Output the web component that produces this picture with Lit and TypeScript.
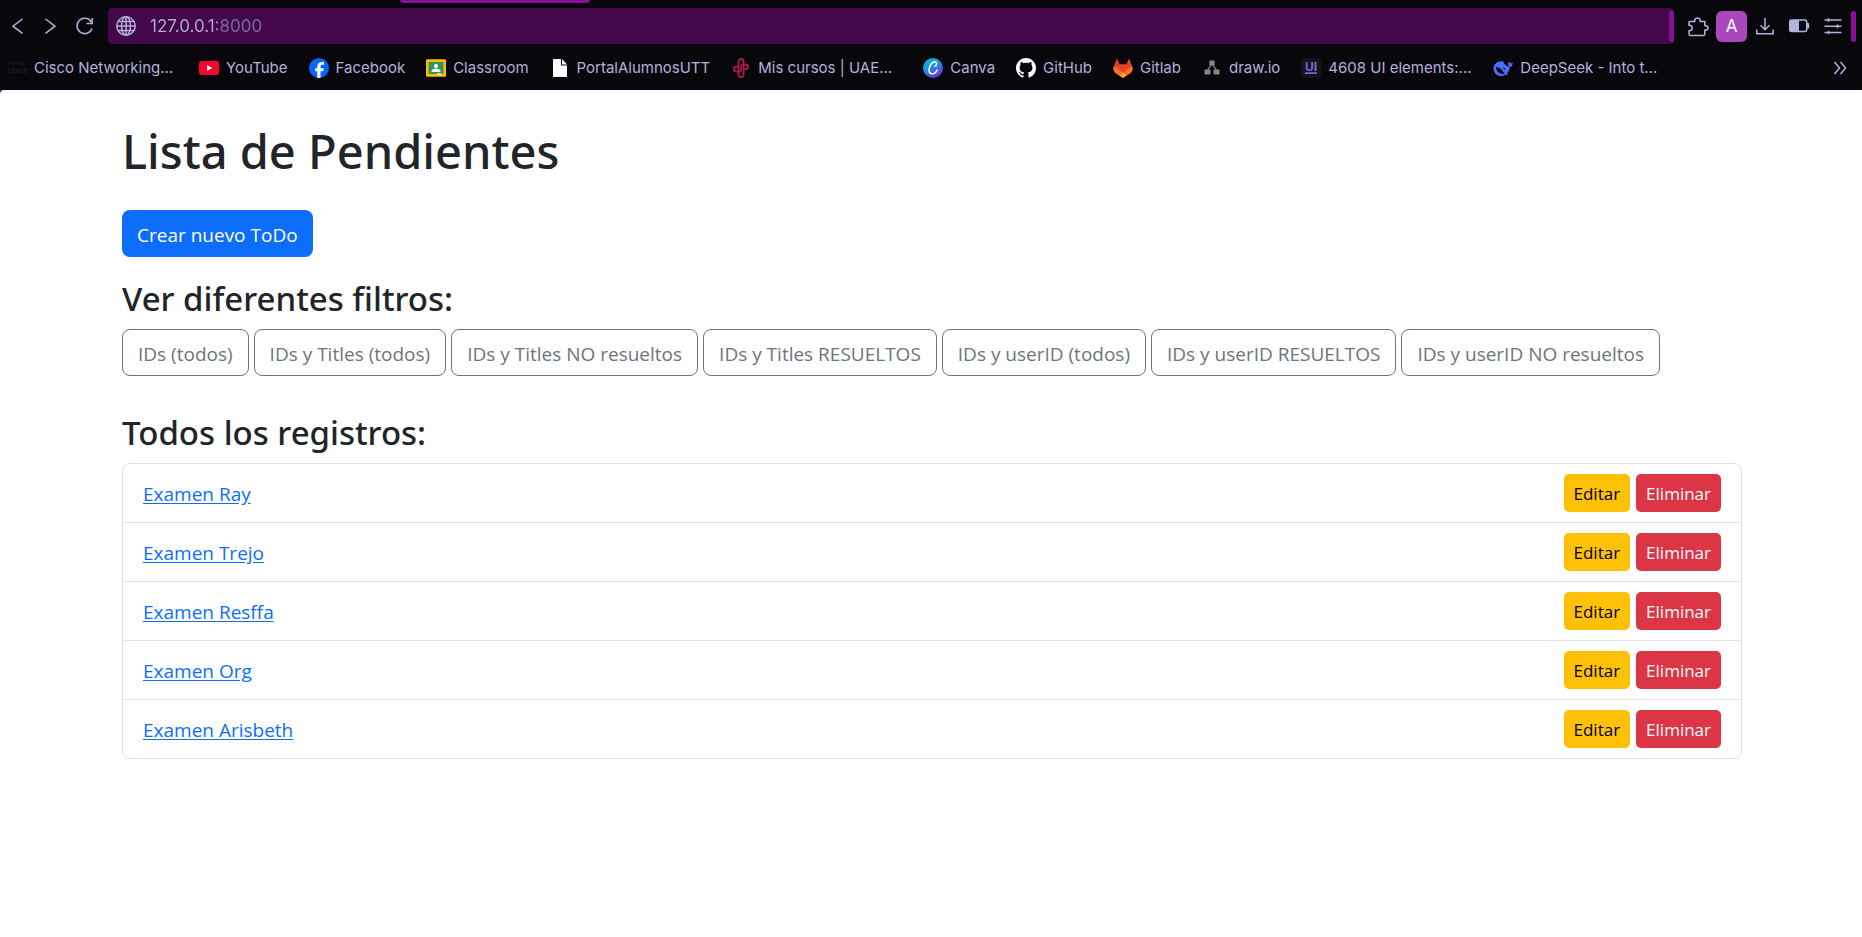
import { LitElement, html, svg, css, type TemplateResult } from "lit";
import { customElement } from "lit/decorators.js";
import { classMap } from "lit/directives/class-map.js";

interface Bookmark {
  label: string;
  icon: TemplateResult;
  long?: boolean;
}

const icon = (body: TemplateResult, size = 20) => html`
  <svg width=${size} height=${size} viewBox="0 0 20 20" aria-hidden="true">${body}</svg>
`;

const bookmarks: Bookmark[] = [
  {
    label: "Cisco Networking...",
    long: true,
    icon: icon(svg`
      <path d="M1.5 5v2M4 3.5V7M6.500 2v5.500M9 3.500V7M11.500 3.500V7M14 2v5.500M16.500 3.500V7M19 5v2" stroke="#1b1a20" stroke-width="1.200"/>
      <text x="0" y="15" font-family="Inter, sans-serif" font-size="8" font-weight="700" fill="#1b1a20">cisco</text>`),
  },
  {
    label: "YouTube",
    icon: icon(svg`
      <rect x="0" y="3" width="20" height="14" rx="3" fill="#ff0033"/>
      <path d="M8 7l5.200 3L8 13z" fill="#fff"/>`),
  },
  {
    label: "Facebook",
    icon: icon(svg`
      <circle cx="10" cy="10" r="10" fill="#0866ff"/>
      <path d="M8.300 19.900v-6.700H6.200v-3h2.100V8.800c0-3.400 1.500-4.900 4.800-4.900.6 0 1.400.1 1.900.2v2.700c-.3 0-.7-.1-1.200-.1-1.700 0-2.300.6-2.300 2.300v1.200h3.300l-.6 3h-2.700v6.800a10 10 0 0 1-3.200-.1z" fill="#fff"/>`),
  },
  {
    label: "Classroom",
    icon: icon(svg`
      <rect x="0" y="1.300" width="20" height="17.400" rx="1.300" fill="#fbbc04"/>
      <rect x="2.600" y="4" width="14.800" height="12" fill="#2f9a58"/>
      <circle cx="10" cy="8" r="2" fill="#fff"/>
      <path d="M5.600 14v-1c0-1.700 2.600-2.500 4.400-2.500s4.400.8 4.400 2.500v1z" fill="#fff"/>
      <rect x="11" y="15.400" width="4.500" height="1.200" fill="#fff"/>`),
  },
  {
    label: "PortalAlumnosUTT",
    icon: icon(svg`
      <path d="M4 1h7v6.500h6V19H3V2a1 1 0 0 1 1-1z" fill="#fff"/>
      <path d="M12 1l5.200 5.500H12z" fill="#fff"/>`),
  },
  {
    label: "Mis cursos | UAE...",
    long: true,
    icon: icon(svg`
      <g fill="none" stroke="#a81e42" stroke-width="1.800">
        <rect x="7.500" y="1" width="5" height="18" rx="2.500"/>
        <path d="M10 12V8.500a2 2 0 0 1 2-2h2.700a2.300 2.300 0 0 1 0 4.600H12M10 8v3.500a2 2 0 0 1-2 2H5.300a2.300 2.300 0 0 1 0-4.600H8"/>
      </g>`),
  },
  {
    label: "Canva",
    icon: icon(svg`
      <defs>
        <linearGradient id="cv" x1="0.100" y1="0" x2="0.600" y2="1">
          <stop offset="0" stop-color="#00c9c4"/>
          <stop offset="0.500" stop-color="#1f8fe0"/>
          <stop offset="1" stop-color="#7a2ae8"/>
        </linearGradient>
      </defs>
      <circle cx="10" cy="10" r="10" fill="url(#cv)"/>
      <path d="M12 8.200c1.600-.6 2.400-3.700.6-4.200C9.600 3.300 6 7.700 6 11.600c0 2.700 1.300 4.200 3.200 4.200 2.200 0 4-1.700 5-3.800" fill="none" stroke="#fff" stroke-width="1.600" stroke-linecap="round"/>`),
  },
  {
    label: "GitHub",
    icon: html`<svg width="20" height="20" viewBox="0 0 16 16" aria-hidden="true">
      <path fill="#fff" d="M8 0C3.580 0 0 3.580 0 8c0 3.540 2.290 6.530 5.470 7.590.4.070.55-.17.55-.38 0-.19-.01-.82-.01-1.490-2.010.37-2.530-.49-2.690-.94-.09-.23-.48-.94-.82-1.130-.28-.15-.68-.52-.01-.53.63-.01 1.080.58 1.230.82.72 1.210 1.870.87 2.330.66.07-.52.28-.87.51-1.070-1.780-.2-3.640-.89-3.640-3.950 0-.87.31-1.590.82-2.150-.08-.2-.36-1.020.08-2.120 0 0 .67-.21 2.200.82.64-.18 1.320-.27 2-.27.68 0 1.360.09 2 .27 1.530-1.040 2.200-.82 2.200-.82.44 1.100.16 1.920.08 2.120.51.56.82 1.270.82 2.150 0 3.070-1.870 3.750-3.650 3.950.29.25.54.73.54 1.480 0 1.070-.01 1.930-.01 2.200 0 .21.15.46.55.38A8.013 8.013 0 0016 8c0-4.420-3.580-8-8-8z"/>
    </svg>`,
  },
  {
    label: "Gitlab",
    icon: icon(svg`
      <path d="M3.900.4L1 8a6.500 6.500 0 0 0 2 7.300l7 4.700 7-4.700A6.500 6.500 0 0 0 19 8L16.100.4l-2.700 5.900H6.600z" fill="#e24329"/>
      <path d="M1 8c-1.600 3.500.2 6.200 2 7.400l3.200 2.200 3.800-2.900zM19 8c1.600 3.500-.2 6.200-2 7.400l-3.200 2.200-3.800-2.900z" fill="#fc6d26"/>
      <path d="M6.200 17.500L10 14.600l3.800 2.900L10 20z" fill="#fca326"/>`),
  },
  {
    label: "draw.io",
    icon: icon(svg`
      <path d="M9 7l-4 6M11 7l4 6" stroke="#858585" stroke-width="1.300"/>
      <rect x="7.300" y="2.600" width="5.400" height="5" rx="0.800" fill="#858585"/>
      <rect x="2.500" y="11.500" width="6" height="5" rx="0.800" fill="#858585"/>
      <rect x="11.500" y="11.500" width="6" height="5" rx="0.800" fill="#858585"/>`),
  },
  {
    label: "4608 UI elements:...",
    long: true,
    icon: icon(svg`
      <defs>
        <linearGradient id="ui" x1="0" y1="0" x2="1" y2="1">
          <stop offset="0" stop-color="#5d5fe8"/>
          <stop offset="1" stop-color="#a463d8"/>
        </linearGradient>
      </defs>
      <rect width="20" height="20" rx="3" fill="#151416"/>
      <text x="10" y="12.500" text-anchor="middle" font-family="Inter, sans-serif" font-size="12" font-weight="700" fill="url(#ui)">UI</text>
      <rect x="4" y="14.200" width="12" height="1.800" fill="#6b62e4"/>`),
  },
  {
    label: "DeepSeek - Into t...",
    long: true,
    icon: icon(svg`
      <path d="M9 3.200C4 3 .5 6.300.5 10.500c0 4.300 3.200 7.600 7.600 7.600 2 0 3.600-.6 4.900-1.500l2.200.6-1-1.700c1.700-1.900 2.200-4 2.400-6.200 1.700-.3 2.900-1.500 3.200-4.700-1 .5-1.700.5-2.400.8-.6-.9-1-1.300-1.100-2-1.700 1.300-1.500 3.500-.1 4.800-.7.600-1.600.6-2.300-.1C12.300 6.500 10.500 5.500 10.200 3.200z" fill="#4d6bfe"/>
      <path d="M3 9.400c2.200-.6 4.900 1 6.300 3.200.8 1.300 1.500 2.100 2.700 2.800-3.900 1.200-8.700-1.200-9-6z" fill="#09070d"/>
      <path d="M10 9.500c1.400-.2 2.500 1 2.300 2.600-1-.6-1.900-1.300-2.300-2.600z" fill="#09070d"/>`),
  },
];

const filters = [
  "IDs (todos)",
  "IDs y Titles (todos)",
  "IDs y Titles NO resueltos",
  "IDs y Titles RESUELTOS",
  "IDs y userID (todos)",
  "IDs y userID RESUELTOS",
  "IDs y userID NO resueltos",
];

const records = ["Examen Ray", "Examen Trejo", "Examen Resffa", "Examen Org", "Examen Arisbeth"];

@customElement("browser-chrome")
export class BrowserChrome extends LitElement {
  static styles = css`
    :host {
      display: block;
      height: 90px;
      background: #08070c;
      color: #b2b2dc;
      font: 15px/20px Inter, sans-serif;
    }
    .tabs {
      height: 8px;
      padding-left: 400px;
    }
    .tab {
      width: 190px;
      height: 3px;
      border-radius: 0 0 4px 4px;
      background: #880f9a;
    }
    .toolbar {
      display: flex;
      align-items: center;
      height: 36px;
      padding-right: 6px;
    }
    button {
      display: grid;
      place-items: center;
      flex: none;
      padding: 0;
      border: 0;
      background: none;
      color: inherit;
      font: inherit;
    }
    svg {
      display: block;
      flex: none;
    }
    .line {
      fill: none;
      stroke: currentColor;
      stroke-width: 1.5;
    }
    .nav {
      display: flex;
      width: 108px;
      padding: 0 7px 0 1px;
      box-sizing: border-box;
      justify-content: space-between;
    }
    .nav button {
      width: 33px;
      height: 36px;
    }
    .address {
      display: flex;
      flex: 1;
      align-items: center;
      gap: 14px;
      height: 36px;
      padding-left: 8px;
      border-radius: 4px;
      background: #42084a;
      overflow: hidden;
    }
    .address input {
      flex: 1;
      min-width: 0;
      height: 24px;
      padding: 0;
      border: 0;
      outline: 0;
      font: 17px/24px Inter, sans-serif;
      color: transparent;
      background: linear-gradient(90deg, #b8a8d4 67px, #7d68ac 67px);
      background-clip: text;
      -webkit-background-clip: text;
    }
    .marker {
      flex: none;
      width: 5px;
      height: 31px;
      border-radius: 3px;
      background: #880f9a;
    }
    .actions {
      display: flex;
      align-items: center;
      gap: 2px;
      padding-left: 8px;
    }
    .actions button {
      width: 32px;
    }
    .actions .avatar {
      width: 31px;
      height: 31px;
      border-radius: 6px;
      background: #ab47bc;
      color: #fff;
      font-size: 17px;
    }
    .bookmarks {
      display: flex;
      align-items: center;
      gap: 21px;
      height: 48px;
      padding: 0 15px 0 7px;
    }
    .bookmark {
      display: flex;
      align-items: center;
      gap: 7px;
      color: inherit;
      text-decoration: none;
      white-space: nowrap;
    }
    .long .label {
      width: 144px;
    }
    .more {
      margin-left: auto;
    }
  `;

  render() {
    return html`
      <div class="tabs"><div class="tab"></div></div>
      <div class="toolbar">
        <nav class="nav">
          <button aria-label="Atrás">
            <svg class="line" width="20" height="20" viewBox="0 0 20 20"><path d="M14.500 3L5 10.200l9.500 7.200" /></svg>
          </button>
          <button aria-label="Adelante">
            <svg class="line" width="20" height="20" viewBox="0 0 20 20"><path d="M4.500 3l9.500 7.200-9.500 7.200" /></svg>
          </button>
          <button aria-label="Recargar">
            <svg class="line" width="20" height="20" viewBox="0 0 20 20"><path d="M17 12.500a7.700 7.700 0 1 1-.6-6.500M11.500 7.400h5.700V2" /></svg>
          </button>
        </nav>
        <div class="address">
          <svg class="line" width="20" height="20" viewBox="0 0 20 20" aria-hidden="true">
            <circle cx="10" cy="10" r="9.200" />
            <ellipse cx="10" cy="10" rx="4.500" ry="9.200" />
            <path d="M10 1v18M1 10h18M2.500 5.500h15M2.500 14.500h15" />
          </svg>
          <input type="text" aria-label="Dirección" .value=${"127.0.0.1:8000"} />
          <div class="marker"></div>
        </div>
        <div class="actions">
          <button aria-label="Extensiones">
            <svg class="line" width="22" height="22" viewBox="0 0 22 22">
              <path d="M3 6.500h4.700C7.500 4.500 8.500 3 10.500 3s3 1.500 2.800 3.500h4.500v4c1.800 0 3.200.8 3.200 2.400s-1.400 2.400-3.200 2.400v3.700a1.500 1.500 0 0 1-1.500 1.500H3.500a1.500 1.500 0 0 1-1.500-1.500v-3c2.300-.1 3.200-1.300 3.200-2.900S4.300 10.300 2 10.200V7.500a1 1 0 0 1 1-1z" />
            </svg>
          </button>
          <button class="avatar" aria-label="Perfil">A</button>
          <button aria-label="Descargas">
            <svg class="line" width="20" height="20" viewBox="0 0 20 20"><path d="M10 2v11.500M5.500 9.200l4.500 4.500 4.500-4.500M1.800 13.500v4.200h16.400v-4.200" /></svg>
          </button>
          <button aria-label="Batería">
            <svg width="22" height="16" viewBox="0 0 22 16">
              <rect class="line" x="1.700" y="2" width="17" height="11.500" rx="2" />
              <path d="M3 2h8v11.500H3a1 1 0 0 1-1-1V3z" fill="currentColor" />
              <path d="M19 5h1.200a1 1 0 0 1 1 1v3.500a1 1 0 0 1-1 1H19z" fill="currentColor" />
            </svg>
          </button>
          <button aria-label="Menú">
            <svg class="line" width="20" height="20" viewBox="0 0 20 20"><path d="M1.500 4h17M1.500 10.200h17M1.500 16.500h17M5.500 2.200v3.600M14.500 8.400v3.600M5.500 14.700v3.600" /></svg>
          </button>
          <div class="marker"></div>
        </div>
      </div>
      <nav class="bookmarks">
        ${bookmarks.map(
          (b) => html`
            <a class=${classMap({ bookmark: true, long: !!b.long })} href="#">
              ${b.icon}<span class="label">${b.label}</span>
            </a>
          `,
        )}
        <button class="more" aria-label="Más marcadores">
          <svg class="line" width="14" height="14" viewBox="0 0 14 14"><path d="M1.500 1l5 6-5 6M7.500 1l5 6-5 6" /></svg>
        </button>
      </nav>
    `;
  }
}

@customElement("todo-page")
export class TodoPage extends LitElement {
  static styles = css`
    :host {
      display: block;
      flex: 1;
      padding-left: 2px;
      border-top-left-radius: 4px;
      background: #fff;
      color: #212529;
      font: 19px/30px "Open Sans", sans-serif;
    }
    .container {
      max-width: 1620px;
      margin: 0 auto;
      padding: 30px 15px;
    }
    h1,
    h2 {
      margin: 0;
      font-family: "Noto Sans", "Open Sans", sans-serif;
      font-weight: 500;
    }
    h1 {
      margin-bottom: 28px;
      font-size: 47px;
      line-height: 62px;
    }
    h2 {
      margin-bottom: 8px;
      font-size: 33px;
      line-height: 44px;
    }
    .btn {
      padding: 9px 14px 6px;
      border: 1px solid transparent;
      border-radius: 8px;
      font: inherit;
      line-height: 30px;
      text-decoration: none;
      white-space: nowrap;
      cursor: pointer;
    }
    .primary {
      display: inline-block;
      margin-bottom: 20px;
      background: #0d6efd;
      color: #fff;
    }
    .filters {
      display: flex;
      flex-wrap: wrap;
      gap: 5px;
      margin-bottom: 35px;
    }
    .outline {
      padding-inline: 15px;
      border-color: #6c757d;
      color: #6c757d;
    }
    .records {
      margin: 0;
      padding: 0;
      list-style: none;
      border: 1px solid #dee2e6;
      border-radius: 8px;
    }
    .record {
      display: flex;
      align-items: center;
      gap: 6px;
      padding: 10px 20px;
    }
    .record + .record {
      border-top: 1px solid #dee2e6;
    }
    .title {
      margin-right: auto;
      padding-top: 2px;
      color: #0d6efd;
      text-underline-offset: 2px;
    }
    .small {
      padding: 6px 9px 4px;
      border-radius: 5px;
      font-size: 17px;
      line-height: 26px;
    }
    .warning {
      background: #ffc107;
      color: #000;
    }
    .danger {
      background: #dc3545;
      color: #fff;
    }
  `;

  render() {
    return html`
      <main class="container">
        <h1>Lista de Pendientes</h1>
        <a class="btn primary" href="#">Crear nuevo ToDo</a>
        <h2>Ver diferentes filtros:</h2>
        <nav class="filters">
          ${filters.map((f) => html`<a class="btn outline" href="#">${f}</a>`)}
        </nav>
        <h2>Todos los registros:</h2>
        <ul class="records">
          ${records.map(
            (r) => html`
              <li class="record">
                <a class="title" href="#">${r}</a>
                <a class="btn small warning" href="#">Editar</a>
                <button class="btn small danger" type="button">Eliminar</button>
              </li>
            `,
          )}
        </ul>
      </main>
    `;
  }
}

@customElement("app-root")
export class AppRoot extends LitElement {
  static styles = css`
    :host {
      display: flex;
      flex-direction: column;
      min-height: 100vh;
      background: #08070c;
    }
  `;

  render() {
    return html`<browser-chrome></browser-chrome><todo-page></todo-page>`;
  }
}
